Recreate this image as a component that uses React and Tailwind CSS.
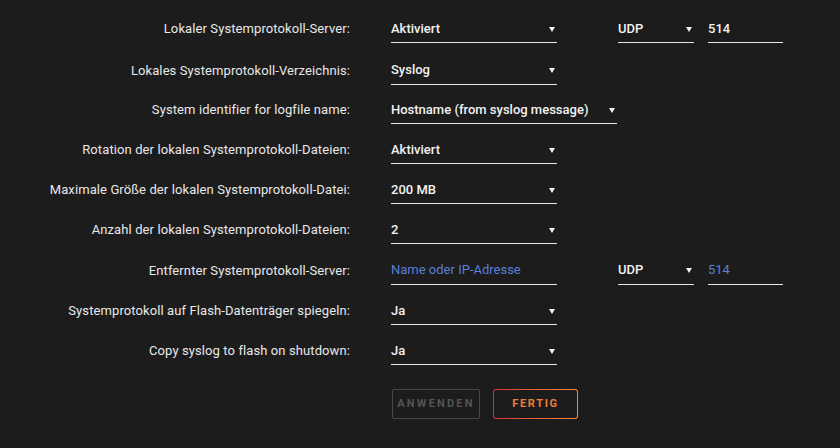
import React from "react";

const Arrow = () => (
  <svg width="6" height="6" viewBox="0 0 6 6" className="shrink-0">
    <path d="M0 1 L6 1 L3 6 Z" fill="#f0f0f0" />
  </svg>
);

function Select({ value, w, placeholder }) {
  return (
    <div className={`flex h-[28px] items-center justify-between border-b border-[#e6e6e6] ${w}`}>
      <span className={placeholder ? "text-[#5a7fd6] font-normal" : "text-[#f2f2f2] font-medium"}>{value}</span>
      <span className="mr-[2px]"><Arrow /></span>
    </div>
  );
}

function Input({ value, w, muted }) {
  return (
    <div className={`flex h-[28px] items-center border-b border-[#e6e6e6] ${w}`}>
      <span className={muted ? "text-[#5a7fd6]" : "text-[#f2f2f2] font-medium"}>{value}</span>
    </div>
  );
}

function Row({ label, children, cls = "h-[40px]" }) {
  return (
    <div className={`flex items-center ${cls}`}>
      <div className="w-[350px] shrink-0 text-right text-[#e8e8e8] tracking-[0.1px]">{label}</div>
      <div className="ml-[41px] flex items-center">{children}</div>
    </div>
  );
}

export default function App() {
  return (
    <div
      className="w-[840px] h-[448px] bg-[#1c1c1c] pt-[9px] text-[13px] overflow-hidden"
      style={{ fontFamily: "Roboto, 'Liberation Sans', sans-serif" }}
    >
      <Row label="Lokaler Systemprotokoll-Server:" cls="h-[40px] mb-[2px]">
        <Select value="Aktiviert" w="w-[166px]" />
        <div className="ml-[61px]"><Select value="UDP" w="w-[76px]" /></div>
        <div className="ml-[14px]"><Input value="514" w="w-[75px]" /></div>
      </Row>
      <Row label="Lokales Systemprotokoll-Verzeichnis:" cls="h-[39px]">
        <Select value="Syslog" w="w-[166px]" />
      </Row>
      <Row label="System identifier for logfile name:">
        <Select value="Hostname (from syslog message)" w="w-[226px]" />
      </Row>
      <Row label="Rotation der lokalen Systemprotokoll-Dateien:">
        <Select value="Aktiviert" w="w-[166px]" />
      </Row>
      <Row label="Maximale Größe der lokalen Systemprotokoll-Datei:">
        <Select value="200 MB" w="w-[166px]" />
      </Row>
      <Row label="Anzahl der lokalen Systemprotokoll-Dateien:">
        <Select value="2" w="w-[166px]" />
      </Row>
      <Row label="Entfernter Systemprotokoll-Server:" cls="h-[41px]">
        <Input value="Name oder IP-Adresse" w="w-[166px]" muted />
        <div className="ml-[61px]"><Select value="UDP" w="w-[76px]" /></div>
        <div className="ml-[14px]"><Input value="514" w="w-[75px]" muted /></div>
      </Row>
      <Row label="Systemprotokoll auf Flash-Datenträger spiegeln:">
        <Select value="Ja" w="w-[166px]" />
      </Row>
      <Row label="Copy syslog to flash on shutdown:">
        <Select value="Ja" w="w-[166px]" />
      </Row>
      <div className="ml-[392px] mt-[18px] flex gap-[13px]">
        <div className="flex h-[30px] w-[88px] items-center justify-center rounded-[2px] border border-[#484848] text-[11px] font-bold tracking-[0.2em] text-[#545454]">
          ANWENDEN
        </div>
        <div className="h-[30px] w-[85px] rounded-[3px] bg-gradient-to-r from-[#dd2f2f] to-[#f28a3c] p-[1px]">
          <div className="flex h-full w-full items-center justify-center rounded-[2px] bg-[#1c1c1c] text-[11px] font-bold tracking-[0.15em] text-[#ee7f3a]">
            FERTIG
          </div>
        </div>
      </div>
    </div>
  );
}
